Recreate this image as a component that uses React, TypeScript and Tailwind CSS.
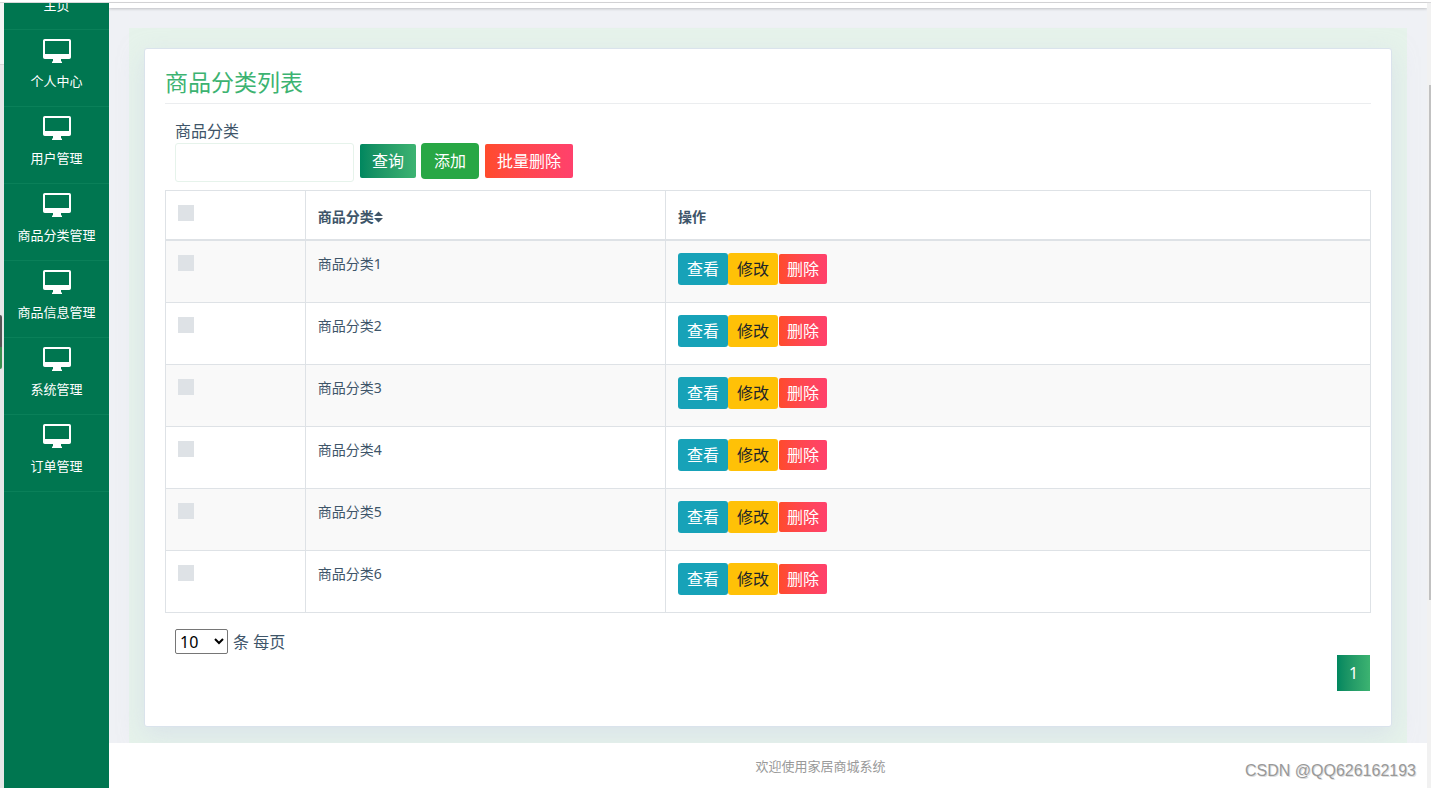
import { useState } from "react";

const menu = ["个人中心", "用户管理", "商品分类管理", "商品信息管理", "系统管理", "订单管理"];
const rows = ["商品分类1", "商品分类2", "商品分类3", "商品分类4", "商品分类5", "商品分类6"];

function DisplayIcon() {
  return (
    <svg width="28" height="24" viewBox="0 0 28 24" fill="currentColor" aria-hidden="true">
      <path
        fillRule="evenodd"
        d="M1.8 0H26.2Q28 0 28 1.8V18.2Q28 20 26.2 20H18V22L19 23V24H9V23L10 22V20H1.8Q0 20 0 18.2V1.8Q0 0 1.8 0ZM2 2V15H26V2Z"
      />
    </svg>
  );
}

function SortIcon() {
  return (
    <svg width="9" height="12" viewBox="0 0 9 12" fill="currentColor" aria-hidden="true">
      <path d="M4.5 0.5L9 5H0ZM0 7H9L4.5 11.5Z" />
    </svg>
  );
}

function Tick({ label }: { label: string }) {
  return (
    <input
      type="checkbox"
      aria-label={label}
      className="block size-4 appearance-none bg-[#dee2e6] checked:bg-[#00875f]"
    />
  );
}

function Sidebar() {
  return (
    <nav className="w-[105px] shrink-0 bg-[#007650] text-[13px] leading-5 text-white">
      <a href="#home" className="flex h-[27px] flex-col justify-end overflow-hidden border-b border-[#0a8059] pb-[14px] text-center">
        <span>主页</span>
      </a>
      {menu.map((name) => (
        <a
          key={name}
          href="#menu"
          className="flex h-[77px] flex-col items-center gap-2 border-b border-[#0a8059] pt-[9px] whitespace-nowrap"
        >
          <DisplayIcon />
          <span>{name}</span>
        </a>
      ))}
    </nav>
  );
}

function CategoryTable() {
  return (
    <table className="mt-2 w-full table-fixed border-collapse border border-[#dee2e6] text-sm leading-5">
      <colgroup>
        <col className="w-[11.6%]" />
        <col className="w-[29.9%]" />
        <col />
      </colgroup>
      <thead>
        <tr className="h-[49px] border-b-2 border-[#dee2e6] text-left">
          <th className="border-r border-[#dee2e6] px-3 pt-[14px] align-top">
            <Tick label="全选" />
          </th>
          <th className="border-r border-[#dee2e6] px-3 pt-1 font-bold">
            <button type="button" className="flex items-center">
              商品分类
              <SortIcon />
            </button>
          </th>
          <th className="px-3 pt-1 font-bold">操作</th>
        </tr>
      </thead>
      <tbody>
        {rows.map((name) => (
          <tr key={name} className="h-[62px] border-b border-[#dee2e6] align-top first:h-[63px] odd:bg-[#f9f9f9]">
            <td className="border-r border-[#dee2e6] px-3 pt-[14px]">
              <Tick label={name} />
            </td>
            <td className="border-r border-[#dee2e6] px-3 pt-[13px]">{name}</td>
            <td className="px-3 pt-3">
              <div className="flex items-center text-base leading-6">
                <button type="button" className="h-8 w-[50px] rounded-[3px] bg-[#17a2b8] text-white">
                  查看
                </button>
                <button type="button" className="h-8 w-[50px] rounded-[3px] bg-[#ffc107] text-[#212529]">
                  修改
                </button>
                <button
                  type="button"
                  className="ml-px h-[30px] w-12 rounded-[2px] bg-linear-to-r from-[#ff4b2b] to-[#ff416c] text-white"
                >
                  删除
                </button>
              </div>
            </td>
          </tr>
        ))}
      </tbody>
    </table>
  );
}

export default function App() {
  const [size, setSize] = useState("10");
  return (
    <div className="flex h-screen flex-col overflow-hidden bg-white font-['Noto_Sans','Noto_Sans_CJK_SC',sans-serif] text-base text-[#3e5569]">
      <div className="h-[3px] shrink-0 border-b border-[#d8d8da]" />
      <div className="flex min-h-0 grow">
        <div className="flex w-1 shrink-0 flex-col items-start bg-[#e6e7e8]">
          <div className="h-[62px] w-full border-b border-[#d5d5d5] bg-[#f3f4f5]" />
          <div className="mt-[250px] h-8 w-0.5 rounded-tr bg-[#555555]" />
          <div className="h-[22px] w-0.5 rounded-br bg-[#3c8f50]" />
        </div>
        <Sidebar />
        <div className="flex min-w-0 grow flex-col bg-[#eff1f5]">
          <div className="h-[5px] shrink-0 bg-white shadow-[0_1px_3px_rgba(0,0,0,0.2)]" />
          <main className="mx-5 mt-5 grow bg-[#e6f3eb] px-[15px] pt-5 pb-4">
            <section className="h-full rounded-[3px] border border-[#dae3ec] bg-white px-5 pt-4 shadow-[0_8px_24px_rgba(205,212,232,0.5)]">
              <h1 className="border-b border-[#ebedef] pb-1 text-[23px] leading-[34px] text-[#3cb371]">商品分类列表</h1>
              <form className="mt-[15px] px-[10px]" onSubmit={(e) => e.preventDefault()}>
                <label htmlFor="category" className="block leading-6">
                  商品分类
                </label>
                <div className="flex items-start text-white">
                  <input
                    id="category"
                    type="text"
                    className="h-[39px] w-[179px] rounded-[3px] border border-[#e6f3eb] bg-white px-3 text-[#3e5569] outline-none"
                  />
                  <button
                    type="submit"
                    className="mt-px ml-[6px] h-[34px] w-14 rounded-[2px] bg-linear-to-r from-[#00875f] to-[#3cb371]"
                  >
                    查询
                  </button>
                  <button type="button" className="ml-[5px] h-9 w-[58px] rounded bg-[#28a745]">
                    添加
                  </button>
                  <button
                    type="button"
                    className="mt-px ml-[6px] h-[34px] w-[88px] rounded-[2px] bg-linear-to-r from-[#ff4b2b] to-[#ff416c]"
                  >
                    批量删除
                  </button>
                </div>
              </form>
              <CategoryTable />
              <div className="mt-4 flex items-center gap-[5px] px-[10px] pb-px">
                <select
                  id="size"
                  value={size}
                  onChange={(e) => setSize(e.target.value)}
                  className="h-[25px] w-[53px] rounded-[2px] border border-[#767676] bg-white text-black"
                >
                  <option>10</option>
                  <option>25</option>
                  <option>50</option>
                </select>
                <label htmlFor="size">条 每页</label>
              </div>
              <div className="flex justify-end">
                <button
                  type="button"
                  className="mr-px h-9 w-[33px] bg-linear-to-r from-[#00875f] to-[#3cb371] text-white"
                >
                  1
                </button>
              </div>
            </section>
          </main>
          <footer className="relative flex h-[45px] shrink-0 items-center justify-center bg-white pt-0.5 text-[13px] text-[#999999]">
            <p className="pl-[105px]">欢迎使用家居商城系统</p>
            <p className="absolute right-[11px] bottom-[5px] font-['Liberation_Sans'] text-base leading-6 text-[#999999] [text-shadow:1px_1px_0_#dddddd]">
              CSDN @QQ626162193
            </p>
          </footer>
        </div>
        <div className="flex w-1 shrink-0 flex-col items-end bg-[#f1f1f1]">
          <div className="mt-[82px] h-[515px] w-0.5 bg-[#c1c1c1]" />
        </div>
      </div>
    </div>
  );
}
